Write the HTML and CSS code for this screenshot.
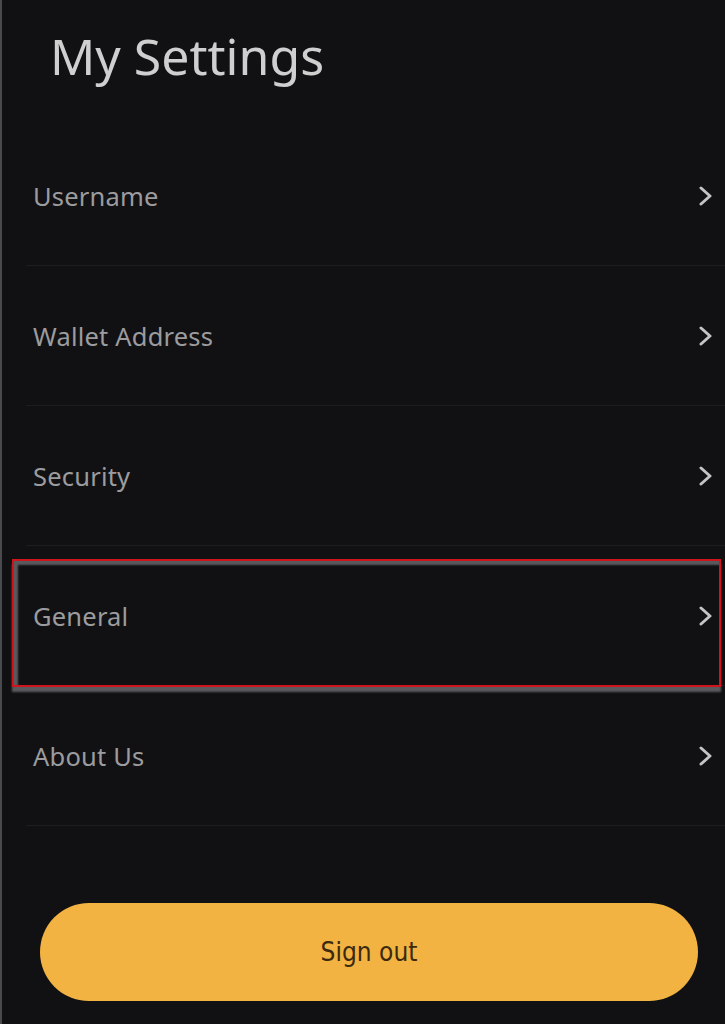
FILE: index.html
```html
<!DOCTYPE html>
<html>
<head>
<meta charset="utf-8">
<link rel="stylesheet" href="styles.css">
</head>
<body>
<div class="screen">
  <h1 class="title">My Settings</h1>
  <ul class="list">
    <li class="row"><span class="label">Username</span><svg class="chev" viewBox="0 0 14 22" width="14" height="22"><polyline points="2,3 11,11 2,19"/></svg></li>
    <li class="row"><span class="label">Wallet Address</span><svg class="chev" viewBox="0 0 14 22" width="14" height="22"><polyline points="2,3 11,11 2,19"/></svg></li>
    <li class="row"><span class="label">Security</span><svg class="chev" viewBox="0 0 14 22" width="14" height="22"><polyline points="2,3 11,11 2,19"/></svg></li>
    <li class="row row-marked"><span class="label">General</span><svg class="chev" viewBox="0 0 14 22" width="14" height="22"><polyline points="2,3 11,11 2,19"/></svg><div class="mark"></div></li>
    <li class="row"><span class="label">About Us</span><svg class="chev" viewBox="0 0 14 22" width="14" height="22"><polyline points="2,3 11,11 2,19"/></svg></li>
  </ul>
  <div class="actions">
    <button class="signout">Sign out</button>
  </div>
</div>
</body>
</html>
```
FILE: styles.css
```css
html, body {
  margin: 0;
  padding: 0;
  background: #111114;
}
.screen {
  width: 725px;
  height: 1024px;
  box-sizing: border-box;
  border-left: 2px solid #4a4a4e;
  background: #111114;
  font-family: "Noto Sans", "DejaVu Sans", sans-serif;
  overflow: hidden;
}
.title {
  margin: 0;
  height: 126px;
  box-sizing: border-box;
  padding: 21px 0 0 48px;
  font-size: 50px;
  font-weight: 400;
  color: #cfcfd0;
  line-height: 70px;
}
.list {
  list-style: none;
  margin: 0;
  padding: 0 0 0 24px;
}
.row {
  position: relative;
  height: 139px;
  border-bottom: 1px solid #1d1d21;
  display: flex;
  align-items: center;
  justify-content: space-between;
  padding: 0 12px 0 7px;
  box-sizing: content-box;
}
.label {
  font-size: 25.5px;
  color: #9c9c9f;
  letter-spacing: 0.2px;
  padding-top: 1px;
}
.chev {
  fill: none;
  stroke: #c4c4c6;
  stroke-width: 3;
  stroke-linecap: round;
  stroke-linejoin: round;
}
.mark {
  position: absolute;
  left: -14px;
  top: 13px;
  width: 709px;
  height: 128px;
  box-sizing: border-box;
  border: 2px solid #d0141c;
  box-shadow: inset 4px 4px 2px #5a5a5e, 0 5px 2px #5a5a5e;
  pointer-events: none;
}
.actions {
  display: flex;
  padding: 77px 0 0 38px;
}
.signout {
  width: 658px;
  height: 98px;
  border: none;
  border-radius: 49px;
  background: #f2b342;
  color: #3b2a0e;
  font-family: "DejaVu Sans Condensed", "Noto Sans", sans-serif;
  font-size: 26px;
  padding: 0;
}
```
